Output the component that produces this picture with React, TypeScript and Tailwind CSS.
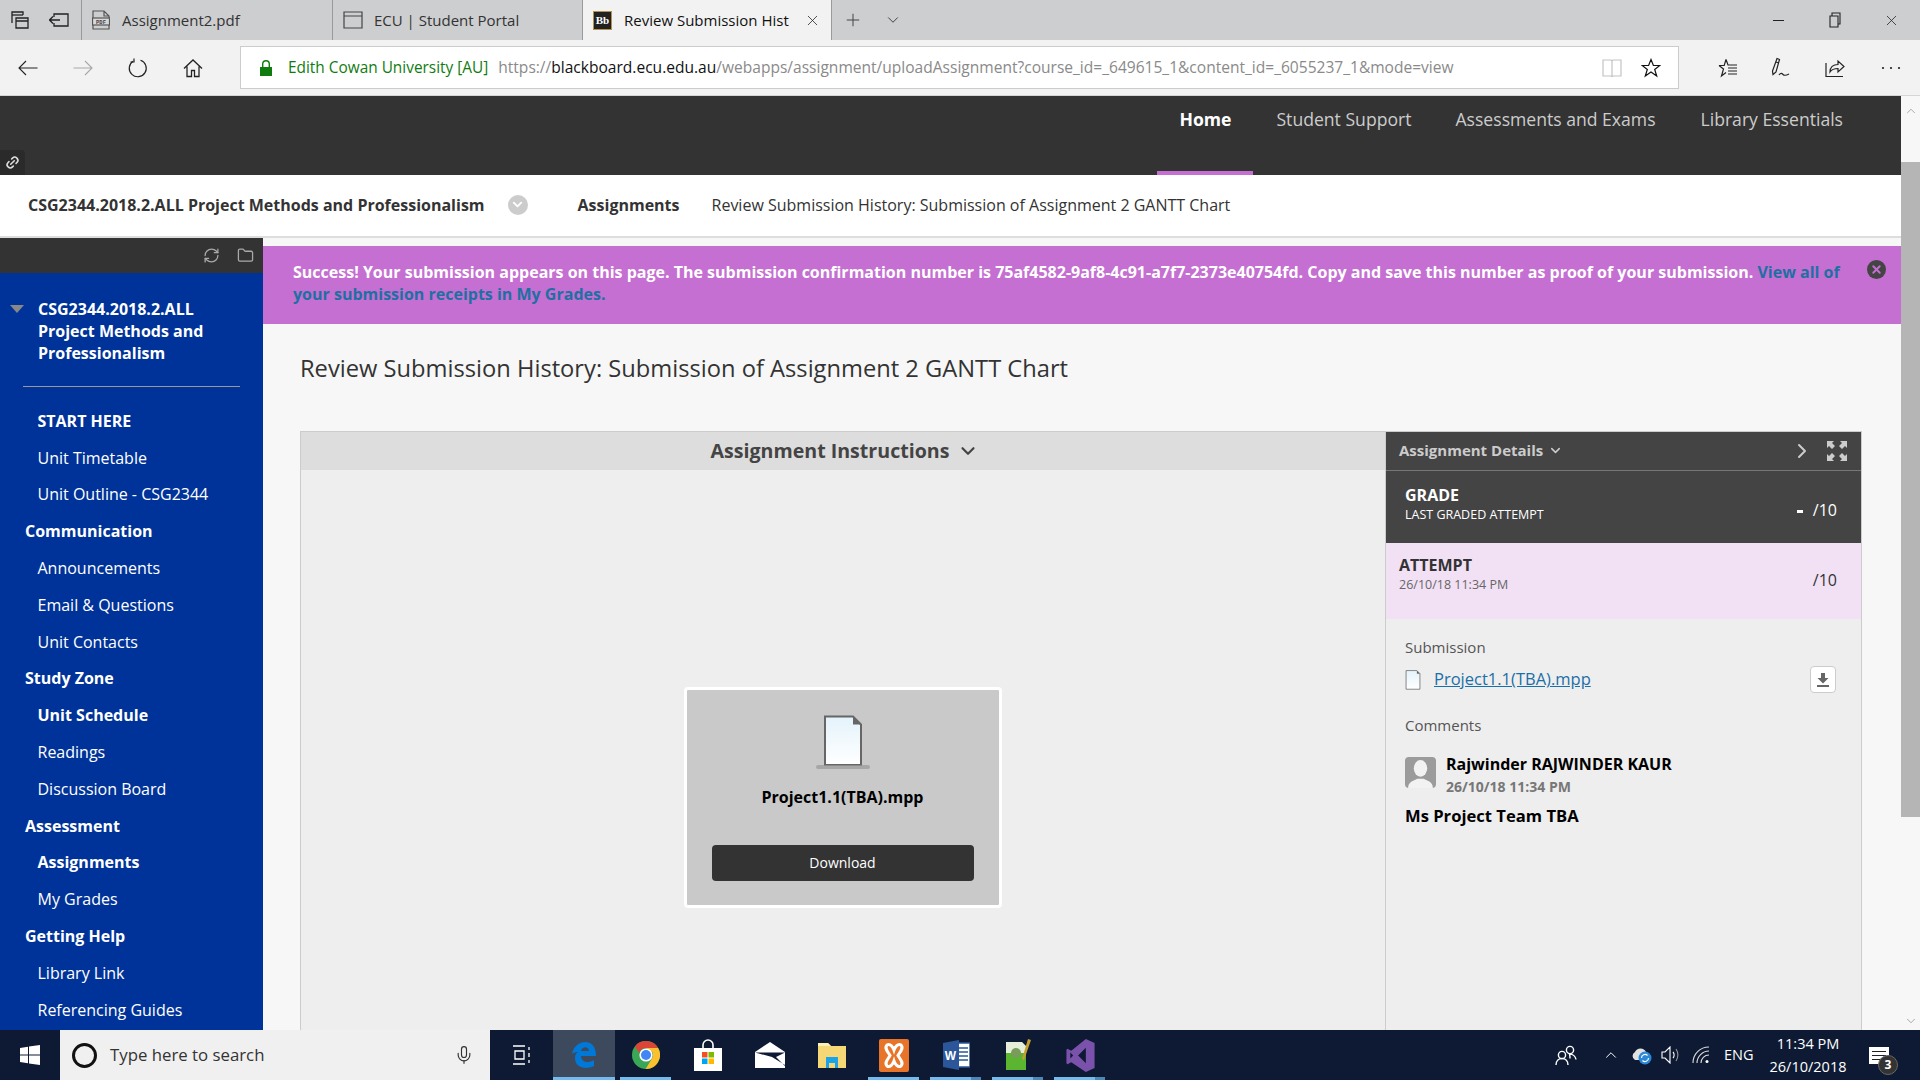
import {
  ChevronDown,
  ChevronRight,
  ChevronUp,
  Folder,
  Link2,
  Mic,
  Plus,
  RefreshCw,
  X,
} from "lucide-react";
import type { ReactNode } from "react";

type NavItem = { label: string; kind: "head" | "link" | "strong" };

const NAV_ITEMS: NavItem[] = [
  { label: "START HERE", kind: "strong" },
  { label: "Unit Timetable", kind: "link" },
  { label: "Unit Outline - CSG2344", kind: "link" },
  { label: "Communication", kind: "head" },
  { label: "Announcements", kind: "link" },
  { label: "Email & Questions", kind: "link" },
  { label: "Unit Contacts", kind: "link" },
  { label: "Study Zone", kind: "head" },
  { label: "Unit Schedule", kind: "strong" },
  { label: "Readings", kind: "link" },
  { label: "Discussion Board", kind: "link" },
  { label: "Assessment", kind: "head" },
  { label: "Assignments", kind: "strong" },
  { label: "My Grades", kind: "link" },
  { label: "Getting Help", kind: "head" },
  { label: "Library Link", kind: "link" },
  { label: "Referencing Guides", kind: "link" },
];

function FileGlyph({ className }: { className: string }) {
  return (
    <svg viewBox="0 0 40 52" className={className}>
      <defs>
        <linearGradient id="paper" x1="0" y1="0" x2="0" y2="1">
          <stop offset="0" stopColor="#e4f3fb" />
          <stop offset="1" stopColor="#ffffff" />
        </linearGradient>
      </defs>
      <path d="M2 1.5h28l8 8V50H2z" fill="url(#paper)" stroke="#666" strokeWidth="2" />
      <path d="M30 1.5v8h8z" fill="#666" />
    </svg>
  );
}

function TabBar() {
  return (
    <div className="flex h-10 items-stretch bg-[#cdcecf] text-[15px] text-[#333]">
      <div className="flex w-[81px] items-center gap-[20px] pl-[11px] text-[#222]">
        <svg viewBox="0 0 18 18" className="size-[18px]" fill="none" stroke="currentColor" strokeWidth="1.3">
          <path d="M1 12V1h11v3" />
          <path d="M1 4h11" />
          <path d="M5 7h12v10H5zM5 10h12" />
        </svg>
        <svg viewBox="0 0 20 14" className="h-[14px] w-5" fill="none" stroke="currentColor" strokeWidth="1.3">
          <path d="M5 4V1h14v12H5v-3M0.5 7H11M4 3.5L0.5 7 4 10.5" />
        </svg>
      </div>
      <div className="flex w-[251px] items-center gap-[12px] border-l border-[#9a9a9a] pl-[10px]">
        <svg viewBox="0 0 18 20" className="h-5 w-[18px]" fill="none" stroke="#555" strokeWidth="1.2">
          <path d="M1 8V1h11l5 5v2M1 15v4h16v-4M12 1v5h5" />
          <rect x="0.5" y="8" width="17" height="7" fill="#d8d8d8" />
          <text x="9" y="13.6" fontSize="5.5" fontWeight="700" textAnchor="middle" fill="#444" stroke="none" fontFamily="Liberation Mono">
            PDF
          </text>
        </svg>
        <span>Assignment2.pdf</span>
      </div>
      <div className="flex w-[250px] items-center gap-[11px] border-l border-[#9a9a9a] pl-[10px]">
        <svg viewBox="0 0 20 18" className="h-[18px] w-5" fill="none" stroke="#444" strokeWidth="1.2">
          <path d="M1 1h18v16H1zM1 5h18" />
        </svg>
        <span>ECU | Student Portal</span>
      </div>
      <div className="flex w-[250px] items-center border-x border-[#9a9a9a] bg-[#f2f2f2] pl-[10px] pr-[10px] text-[#111]">
        <span className="mr-3 flex size-[19px] items-center justify-center border border-[#b3914f] bg-[#222] font-['Liberation_Serif',serif] text-[11px] font-bold leading-none text-white">
          Bb
        </span>
        <span className="w-[175px] overflow-hidden whitespace-nowrap">Review Submission Hist</span>
        <X className="ml-auto size-[17px] text-[#333]" strokeWidth={1.2} />
      </div>
      <div className="flex items-center gap-[21px] pl-[11px]">
        <Plus className="size-[20px] text-[#444]" strokeWidth={1.2} />
        <ChevronDown className="size-[18px] text-[#333]" strokeWidth={1.2} />
      </div>
      <div className="ml-auto flex items-center pr-[20px] text-[#222]">
        <span className="h-px w-[11px] bg-[#222]" />
        <svg viewBox="0 0 14 16" className="ml-[44px] h-4 w-[14px]" fill="none" stroke="currentColor" strokeWidth="1.1">
          <path d="M2 4h8v11H2zM4 4V1h8v11h-2" />
        </svg>
        <X className="ml-[41px] size-[17px]" strokeWidth={1.1} />
      </div>
    </div>
  );
}

function AddressBar() {
  return (
    <div className="flex h-[56px] items-center border-b border-[#d5d5d5] bg-[#f2f2f2] text-[#222]">
      <div className="flex w-[240px] items-center pl-[18px]">
        <svg viewBox="0 0 20 16" className="h-4 w-5" fill="none" stroke="currentColor" strokeWidth="1.1">
          <path d="M19.5 8H1M8 1L1 8l7 7" />
        </svg>
        <svg viewBox="0 0 20 16" className="ml-[35px] h-4 w-5" fill="none" stroke="#a8a8a8" strokeWidth="1.1">
          <path d="M0.5 8H19M12 1l7 7-7 7" />
        </svg>
        <svg viewBox="0 0 20 20" className="ml-[35px] size-5" fill="none" stroke="currentColor" strokeWidth="1.2">
          <path d="M12.5 2.2A8.5 8.5 0 1 1 5 3.2" />
          <path d="M6 0.5v3.5H2.5" />
        </svg>
        <svg viewBox="0 0 20 20" className="ml-[35px] size-5" fill="none" stroke="currentColor" strokeWidth="1.3">
          <path d="M1 10.5L10 2l9 8.5M4 8.5V18.5h4.5v-6h3v6H16V8.5" />
        </svg>
      </div>
      <div className="flex h-[43px] w-[1439px] items-center border border-[#ccc] bg-white pl-[19px] text-[15.4px]">
        <svg viewBox="0 0 12 16" className="h-4 w-3" fill="#107c10">
          <path d="M2 7V4a4 4 0 0 1 8 0v3h-1.4V4a2.600 2.600 0 0 0-5.200 0v3z" />
          <rect y="7" width="12" height="9" />
        </svg>
        <span className="ml-[16px] pt-[1px] text-[#107c10]">Edith Cowan University [AU]</span>
        <span className="ml-[10px] whitespace-nowrap pt-[1px] text-[15.55px] text-[#8a8a8a]">
          https://<span className="text-[#111]">blackboard.ecu.edu.au</span>
          /webapps/assignment/uploadAssignment?course_id=_649615_1&amp;content_id=_6055237_1&amp;mode=view
        </span>
        <div className="ml-auto flex items-center gap-[19px] pr-[17px]">
          <svg viewBox="0 0 20 18" className="h-[18px] w-5" fill="none" stroke="#c4c4c4" strokeWidth="1.2">
            <path d="M1 1h8l1 1 1-1h8v16h-8l-1 0.600-1-0.600H1zM10 2v15.600" />
          </svg>
          <svg viewBox="0 0 20 20" className="size-5" fill="none" stroke="#111" strokeWidth="1.2">
            <path d="M10 1.500l2.400 6h6.400l-5.100 4 2 6.600-5.700-4-5.700 4 2-6.600-5.100-4h6.400z" />
          </svg>
        </div>
      </div>
      <div className="flex flex-1 items-center pl-[39px]">
        <svg viewBox="0 0 20 20" className="size-5" fill="none" stroke="currentColor" strokeWidth="1.2">
          <path d="M8 1.500L10 7h2M1 7.500h5.200L8 1.500M1 7.500l4.500 3.500-2 7L8 14.500M10 10h9M10 13h9M10 16h9M11 7h8" />
        </svg>
        <svg viewBox="0 0 20 22" className="ml-[33px] h-[22px] w-5" fill="none" stroke="currentColor" strokeWidth="1.2">
          <path d="M6 1.500l2.500 1-3.500 12.500-3 2.500-0.500-3.500zM5 5l2.500 1" />
          <path d="M8 18c2-2.500 3-1.500 4-0.500s3 1 6-0.500" />
        </svg>
        <svg viewBox="0 0 20 20" className="ml-[34px] size-5" fill="none" stroke="currentColor" strokeWidth="1.2">
          <path d="M1 5v13.500h17M5 14c0-5 3-7.500 8-7.500V3l6 5.500-6 5.500v-3.500c-3 0-6 0.500-8 3.500z" />
        </svg>
        <svg viewBox="0 0 20 4" className="ml-[36px] h-1 w-5" fill="currentColor">
          <circle cx="2" cy="2" r="1.1" />
          <circle cx="10" cy="2" r="1.1" />
          <circle cx="18" cy="2" r="1.1" />
        </svg>
      </div>
    </div>
  );
}

function TopNav() {
  return (
    <div className="relative flex h-[79px] justify-end bg-[#333] pr-[58px] text-[17.6px] text-[#ccc]">
      <div className="flex h-full border-b-[4px] border-[#c46fd1] px-[22px] pt-[8px] font-bold text-white">
        <span className="mt-[2px]">Home</span>
      </div>
      <span className="ml-[23px] mt-[10px]">Student Support</span>
      <span className="ml-[44px] mt-[10px]">Assessments and Exams</span>
      <span className="ml-[45px] mt-[10px]">Library Essentials</span>
      <div className="absolute bottom-0 left-0 flex h-[25px] w-[25px] items-center justify-center rounded-tr bg-[#2a2a2a]">
        <Link2 className="size-[15px] -rotate-45 text-[#ddd]" strokeWidth={2.5} />
      </div>
    </div>
  );
}

function Breadcrumb() {
  return (
    <div className="flex h-[63px] items-center border-b-2 border-[#ddd] bg-white pb-[2px] pl-[28px] text-[16px] text-[#333]">
      <span className="font-bold">CSG2344.2018.2.ALL Project Methods and Professionalism</span>
      <span className="ml-[23px] flex size-[20px] items-center justify-center rounded-full bg-[#ccc]">
        <ChevronDown className="size-[15px] text-white" strokeWidth={3} />
      </span>
      <span className="ml-[50px] font-bold">Assignments</span>
      <span className="ml-[32px]">Review Submission History: Submission of Assignment 2 GANTT Chart</span>
    </div>
  );
}

function Sidebar() {
  return (
    <aside className="flex w-[263px] shrink-0 flex-col overflow-hidden bg-[#003399] text-white">
      <div className="flex h-[35px] shrink-0 items-center justify-end gap-[17px] bg-[#333] pr-[9px] text-[#aaa]">
        <RefreshCw className="size-[17px]" strokeWidth={1.8} />
        <Folder className="size-[17px]" strokeWidth={1.8} />
      </div>
      <div className="relative mt-[25px] pl-[38px] pr-3 text-[16px] font-bold leading-[22px]">
        <span className="absolute left-[10px] top-[7px] size-0 border-x-[7px] border-t-[8px] border-x-transparent border-t-[#888]" />
        CSG2344.2018.2.ALL
        <br />
        Project Methods and
        <br />
        Professionalism
      </div>
      <div className="ml-[23px] mt-[22px] h-px w-[217px] shrink-0 bg-[#999]" />
      <ul className="mt-[15.5px] text-[16px]">
        {NAV_ITEMS.map((item) => (
          <li
            key={item.label}
            className={
              item.kind === "head"
                ? "flex h-[36.8px] items-center pl-[25px] font-bold"
                : item.kind === "strong"
                  ? "flex h-[36.8px] items-center pl-[37.5px] font-bold"
                  : "flex h-[36.8px] items-center pl-[37.5px]"
            }
          >
            {item.label}
          </li>
        ))}
      </ul>
    </aside>
  );
}

function Viewer() {
  return (
    <div className="flex min-w-0 flex-1 flex-col">
      <div className="flex h-[38px] items-center justify-center gap-[8px] bg-[#ddd] pl-[4px] text-[19.6px] font-bold text-[#444]">
        Assignment Instructions
        <ChevronDown className="size-[22px]" strokeWidth={2.4} />
      </div>
      <div className="flex flex-1 justify-center bg-[#eee] pr-[1px] pt-[217px]">
        <div className="flex h-[221px] w-[318px] flex-col items-center rounded border-[3px] border-white bg-[#c9c9c9]">
          <div className="relative mt-[25px]">
            <FileGlyph className="h-[52px] w-[40px]" />
            <span className="absolute -bottom-[2px] left-[-7px] h-[4px] w-[54px] rounded-full bg-[#999] opacity-70" />
          </div>
          <span className="mt-[18px] text-[16px] font-bold text-black">Project1.1(TBA).mpp</span>
          <button className="mt-[36px] h-[36px] w-[262px] rounded-sm bg-[#333] pb-[2px] text-[14px] text-white">
            Download
          </button>
        </div>
      </div>
    </div>
  );
}

function DetailsPanel() {
  return (
    <div className="flex w-[476px] shrink-0 flex-col border-l border-[#ccc] bg-[#eee]">
      <div className="flex h-[39px] items-center border-b border-[#777] bg-[#444] pb-[1px] pl-[13px] pr-[14px] text-[#ccc]">
        <span className="text-[15px] font-bold">Assignment Details</span>
        <ChevronDown className="ml-[5px] size-[15px]" strokeWidth={2.4} />
        <ChevronRight className="ml-auto size-[24px]" strokeWidth={2} />
        <svg viewBox="0 0 20 20" className="ml-[13px] size-[20px]" fill="currentColor">
          <path d="M0 0h7L5 2l3 3-3 3-3-3-2 2zM20 0v7l-2-2-3 3-3-3 3-3-2-2zM0 20v-7l2 2 3-3 3 3-3 3 2 2zM20 20h-7l2-2-3-3 3-3 3 3 2-2z" />
        </svg>
      </div>
      <div className="flex h-[72px] items-start justify-between bg-[#444] pl-[19px] pr-[24px] pt-[13px] text-white">
        <div className="flex flex-col">
          <span className="text-[16px] font-bold leading-[22px]">GRADE</span>
          <span className="text-[12.5px] leading-[17px]">LAST GRADED ATTEMPT</span>
        </div>
        <div className="mt-[15px] flex items-start text-[16px] leading-[22px]">
          <span className="mr-[10px] mt-[11px] h-[3px] w-[6px] bg-white" />
          <span>/10</span>
        </div>
      </div>
      <div className="flex h-[76px] items-start justify-between bg-[#f2e1f5] pl-[13px] pr-[24px] pt-[11px] text-[#333]">
        <div className="flex flex-col">
          <span className="text-[16px] font-bold leading-[22px]">ATTEMPT</span>
          <span className="text-[12.5px] leading-[17px] text-[#666]">26/10/18 11:34 PM</span>
        </div>
        <span className="mt-[14px] text-[16px]">/10</span>
      </div>
      <div className="px-[19px] pt-[16.5px]">
        <p className="text-[15px] leading-[22px] text-[#555]">Submission</p>
        <div className="mt-[8px] flex h-[28px] items-center pr-[6px]">
          <FileGlyph className="h-[20px] w-[16px]" />
          <span className="ml-[13px] text-[16.5px] text-[#1b6fa8] underline">Project1.1(TBA).mpp</span>
          <span className="ml-auto flex h-[27px] w-[26px] items-center justify-center rounded-sm border border-[#ccc] bg-white">
            <svg viewBox="0 0 12 14" className="h-[14px] w-3" fill="#666">
              <path d="M4 0h4v5h3.500L6 10.500.5 5H4zM0 12h12v2H0z" />
            </svg>
          </span>
        </div>
        <p className="mt-[20px] text-[15px] leading-[22px] text-[#555]">Comments</p>
        <div className="mt-[21px] flex">
          <span className="flex h-[31px] w-[31px] shrink-0 items-end justify-center overflow-hidden rounded-sm bg-[#9b9b9b]">
            <svg viewBox="0 0 30 30" className="size-[31px]" fill="#f2f2f2">
              <ellipse cx="15" cy="11" rx="6.5" ry="8" />
              <path d="M3 30c0-6 5-7 9-9h6c4 2 9 3 9 9z" />
            </svg>
          </span>
          <div className="ml-[10px] -mt-[5px] flex flex-col">
            <span className="text-[16px] font-bold leading-[24px] text-black">Rajwinder RAJWINDER KAUR</span>
            <span className="text-[14px] font-bold leading-[22px] text-[#777]">26/10/18 11:34 PM</span>
          </div>
        </div>
        <p className="mt-[6px] text-[16.6px] font-bold leading-[24px] text-black">Ms Project Team TBA</p>
      </div>
    </div>
  );
}

function Content() {
  return (
    <main className="flex min-w-0 flex-1 flex-col bg-[#f7f7f7] pt-[8px]">
      <div className="relative h-[78px] shrink-0 bg-[#c46fd1] pl-[30px] pr-[60px] pt-[15px] text-[16px] font-bold leading-[22px] text-white">
        Success! Your submission appears on this page. The submission confirmation number is
        75af4582-9af8-4c91-a7f7-2373e40754fd. Copy and save this number as proof of your submission.{" "}
        <span className="text-[#1f6fa3]">View all of your submission receipts in My Grades.</span>
        <span className="absolute right-[15px] top-[14px] flex size-[19px] items-center justify-center rounded-full bg-[#444]">
          <X className="size-[13px] text-[#c46fd1]" strokeWidth={3.5} />
        </span>
      </div>
      <h1 className="mb-[46px] ml-[37px] mt-[27px] text-[23.7px] leading-[34px] text-[#333]">
        Review Submission History: Submission of Assignment 2 GANTT Chart
      </h1>
      <div className="ml-[37px] mr-[39px] flex flex-1 border-x border-t border-[#ccc]">
        <Viewer />
        <DetailsPanel />
      </div>
    </main>
  );
}

function Scrollbar() {
  return (
    <div className="flex w-[19px] shrink-0 flex-col items-center bg-[#f7f7f7] text-[#888]">
      <ChevronUp className="mt-[8px] size-[14px]" strokeWidth={1.2} />
      <div className="mt-[44px] h-[655px] w-full bg-[#b5b5b5]" />
      <ChevronDown className="mt-auto mb-[2px] size-[14px]" strokeWidth={1.2} />
    </div>
  );
}

function TaskIcon({
  active,
  running,
  split,
  children,
}: {
  active?: boolean;
  running?: boolean;
  split?: boolean;
  children: ReactNode;
}) {
  return (
    <div
      className={
        active
          ? "relative flex h-full w-[62px] items-center justify-center bg-[#3d4a5e]"
          : "relative flex h-full w-[62px] items-center justify-center"
      }
    >
      {children}
      {running && (
        <span className={active ? "absolute bottom-0 left-0 right-0 h-[3px] bg-[#76b9ed]" : "absolute bottom-0 left-[5px] right-[6px] h-[3px] bg-[#76b9ed]"}>
          {split && <span className="absolute bottom-0 right-0 h-[3px] w-[10px] bg-[#4f86b8]" />}
        </span>
      )}
    </div>
  );
}

function Taskbar() {
  return (
    <footer className="flex h-[50px] shrink-0 items-center bg-[#0e1a33] text-white">
      <div className="flex h-full w-[60px] items-center justify-center">
        <svg viewBox="0 0 20 20" className="size-[20px]" fill="#fff">
          <path d="M0 3l8-1.200V9.500H0zM9 1.600L20 0v9.500H9zM0 10.500h8v7.700L0 17zM9 10.500h11V20L9 18.400z" />
        </svg>
      </div>
      <div className="flex h-full w-[430px] items-center bg-[#f0f0f0] pl-[12px] pr-[16px] text-[16.8px] text-[#333]">
        <span className="size-[25px] rounded-full border-[3px] border-[#111]" />
        <span className="ml-[13px]">Type here to search</span>
        <Mic className="ml-auto size-[20px] text-[#333]" strokeWidth={1.4} />
      </div>
      <div className="flex h-full w-[63px] items-center justify-center">
        <svg viewBox="0 0 20 20" className="size-[20px]" fill="none" stroke="#fff" strokeWidth="1.3">
          <path d="M1 1h12M1 19h12M3 6h9v8H3zM17 2v3M17 8v4M17 15v3" />
        </svg>
      </div>
      <TaskIcon active running>
        <svg viewBox="0 0 24 28" className="h-[28px] w-[24px]" fill="#0078d7">
          <path
            fillRule="evenodd"
            d="M0 13C1 6 7 1 13 1c7 0 11 5 11 14H9c0 6 7 8 13 4v6c-8 4-19 2-19-8 0-3 1-5 3-6-3 0-5 1-6 2zM9 10h8c0-5-7-5-8 0z"
          />
        </svg>
      </TaskIcon>
      <TaskIcon running>
        <svg viewBox="0 0 28 28" className="size-[28px]">
          <circle cx="14" cy="14" r="14" fill="#3aa757" />
          <path d="M14 0a14 14 0 0 1 12.100 7H14a7 7 0 0 0-6.700 5L2.900 5.400A14 14 0 0 1 14 0z" fill="#db4437" />
          <path d="M26.100 7a14 14 0 0 1-12.500 21l6.400-10.500a7 7 0 0 0 0-7L14 7z" fill="#fbc02d" />
          <circle cx="14" cy="14" r="6.6" fill="#fff" />
          <circle cx="14" cy="14" r="5" fill="#4285f4" />
        </svg>
      </TaskIcon>
      <TaskIcon>
        <svg viewBox="0 0 28 32" className="h-[32px] w-[28px]">
          <path d="M9 10V6a5 5 0 0 1 10 0v4" fill="none" stroke="#fff" strokeWidth="1.6" />
          <rect x="0" y="9" width="28" height="23" fill="#fff" />
          <rect x="8" y="13" width="5.5" height="5.5" fill="#f25022" />
          <rect x="14.5" y="13" width="5.5" height="5.5" fill="#7fba00" />
          <rect x="8" y="19.5" width="5.5" height="5.5" fill="#00a4ef" />
          <rect x="14.5" y="19.5" width="5.5" height="5.5" fill="#ffb900" />
        </svg>
      </TaskIcon>
      <TaskIcon>
        <svg viewBox="0 0 30 26" className="h-[26px] w-[30px]">
          <path d="M0 10L15 0l15 10v16H0z" fill="#fff" />
          <path d="M0 10.500h30L21 15l9 9v-1L17 15z" fill="#0e1a33" />
        </svg>
      </TaskIcon>
      <TaskIcon>
        <svg viewBox="0 0 28 26" className="h-[26px] w-[28px]">
          <path d="M0 1h10l3 3h15v22H0z" fill="#f6d775" />
          <path d="M0 1h10l3 3H0z" fill="#fdf0b5" />
          <path d="M8 26V15h12v11h-3v-5h-6v5z" fill="#1aa3e8" />
        </svg>
      </TaskIcon>
      <TaskIcon running>
        <svg viewBox="0 0 30 33" className="h-[33px] w-[30px]">
          <rect width="30" height="33" rx="2" fill="#e8742a" />
          <path
            d="M8 6c3-2 6 2 7 5 1-3 4-7 7-5 3 3-1 7-3 10.500 2 3.500 6 7.500 3 10.500-3 2-6-2-7-5-1 3-4 7-7 5-3-3 1-7 3-10.500-2-3.500-6-7.500-3-10.500z"
            fill="none"
            stroke="#fff"
            strokeWidth="3"
          />
        </svg>
      </TaskIcon>
      <TaskIcon running split>
        <svg viewBox="0 0 27 30" className="h-[30px] w-[27px]">
          <rect x="9" y="3" width="18" height="24" fill="#fff" stroke="#2b579a" strokeWidth="1.5" />
          <path d="M16 8h9M16 12h9M16 16h9M16 20h9" stroke="#2b579a" strokeWidth="1.5" />
          <path d="M0 3l16-3v30L0 27z" fill="#2b579a" />
          <text x="7.5" y="20" fontSize="12" fontWeight="700" textAnchor="middle" fill="#fff" fontFamily="Liberation Sans">
            W
          </text>
        </svg>
      </TaskIcon>
      <TaskIcon running split>
        <svg viewBox="0 0 28 32" className="h-[32px] w-[28px]">
          <path d="M2 3h16l4 4v24H2z" fill="#e6edd8" />
          <path d="M2 14h20v17H2z" fill="#5cb531" />
          <circle cx="12" cy="14" r="5" fill="#7a9c5a" />
          <path d="M24 0l3 1-7 20-2-1z" fill="#c8a030" />
        </svg>
      </TaskIcon>
      <TaskIcon running split>
        <svg viewBox="0 0 29 34" className="h-[33px] w-[29px]" fill="#7b52ab">
          <path d="M20 0l9 4v26l-9 4L5 24l-4 2-1-1V11l1-1 4 2zM20 9l-8 8 8 8zM4 14v6l3-3z" fillRule="evenodd" />
        </svg>
      </TaskIcon>
      <div className="ml-auto flex h-full items-center pr-[31px]">
        <svg viewBox="0 0 22 22" className="size-[22px]" fill="none" stroke="#fff" strokeWidth="1.4">
          <circle cx="15" cy="6" r="3.6" />
          <circle cx="7" cy="11" r="3.6" />
          <path d="M1 21c0-4 2.500-6.500 6-6.500s6 2.500 6 6.500M15 14.500c0-1 0-3-.5-4.500 3 0 6 2 6.500 5.500" />
        </svg>
        <ChevronUp className="ml-[25px] size-[18px]" strokeWidth={1.3} />
        <svg viewBox="0 0 22 20" className="ml-[10px] h-5 w-[22px]">
          <path d="M5 15a4.500 4.500 0 0 1 0-8 6 6 0 0 1 11 0 4.500 4.500 0 0 1 2 8z" fill="#e2e2e2" />
          <circle cx="15" cy="13" r="6.500" fill="#2b88d8" />
          <path d="M11.500 13a3.500 3.500 0 0 1 6-2.500M18.500 13a3.500 3.500 0 0 1-6 2.500" fill="none" stroke="#fff" strokeWidth="1.2" />
        </svg>
        <svg viewBox="0 0 20 18" className="ml-[9px] h-[18px] w-5" fill="none" stroke="#fff" strokeWidth="1.1">
          <path d="M1 6h3l5-5v16l-5-5H1zM12 6c1.500 1.500 1.500 4.500 0 6" />
          <path d="M15 3c2.500 3.500 2.500 8.500 0 12" stroke="#999" />
        </svg>
        <svg viewBox="0 0 18 18" className="ml-[11px] size-[18px]" fill="none" stroke="#ddd" strokeWidth="1.1">
          <path d="M1 17C1 8 8 1 17 1M5 17c0-6.500 5.500-12 12-12M9 17c0-4.500 3.500-8 8-8" />
          <circle cx="15" cy="15.500" r="1.500" fill="#fff" stroke="none" />
        </svg>
        <span className="ml-[14px] w-[29px] text-[14.5px]">ENG</span>
        <div className="ml-[15px] flex w-[80px] flex-col items-center whitespace-nowrap text-[14.5px] leading-[23px]">
          <span>11:34 PM</span>
          <span>26/10/2018</span>
        </div>
        <span className="relative ml-[21px] flex h-[17px] w-[20px] flex-col justify-center gap-[3px] bg-white px-[3px]">
          <span className="h-px bg-[#222]" />
          <span className="h-px bg-[#222]" />
          <span className="h-px bg-[#222]" />
          <span className="absolute -bottom-[11px] -right-[9px] flex size-[20px] items-center justify-center rounded-full border border-[#666] bg-[#333] text-[12px] font-bold text-white">
            3
          </span>
        </span>
      </div>
    </footer>
  );
}

export default function App() {
  return (
    <div className="flex h-screen flex-col overflow-hidden font-['Open_Sans',sans-serif]">
      <TabBar />
      <AddressBar />
      <div className="flex min-h-0 flex-1">
        <div className="flex min-w-0 flex-1 flex-col">
          <TopNav />
          <Breadcrumb />
          <div className="flex min-h-0 flex-1">
            <Sidebar />
            <Content />
          </div>
        </div>
        <Scrollbar />
      </div>
      <Taskbar />
    </div>
  );
}
